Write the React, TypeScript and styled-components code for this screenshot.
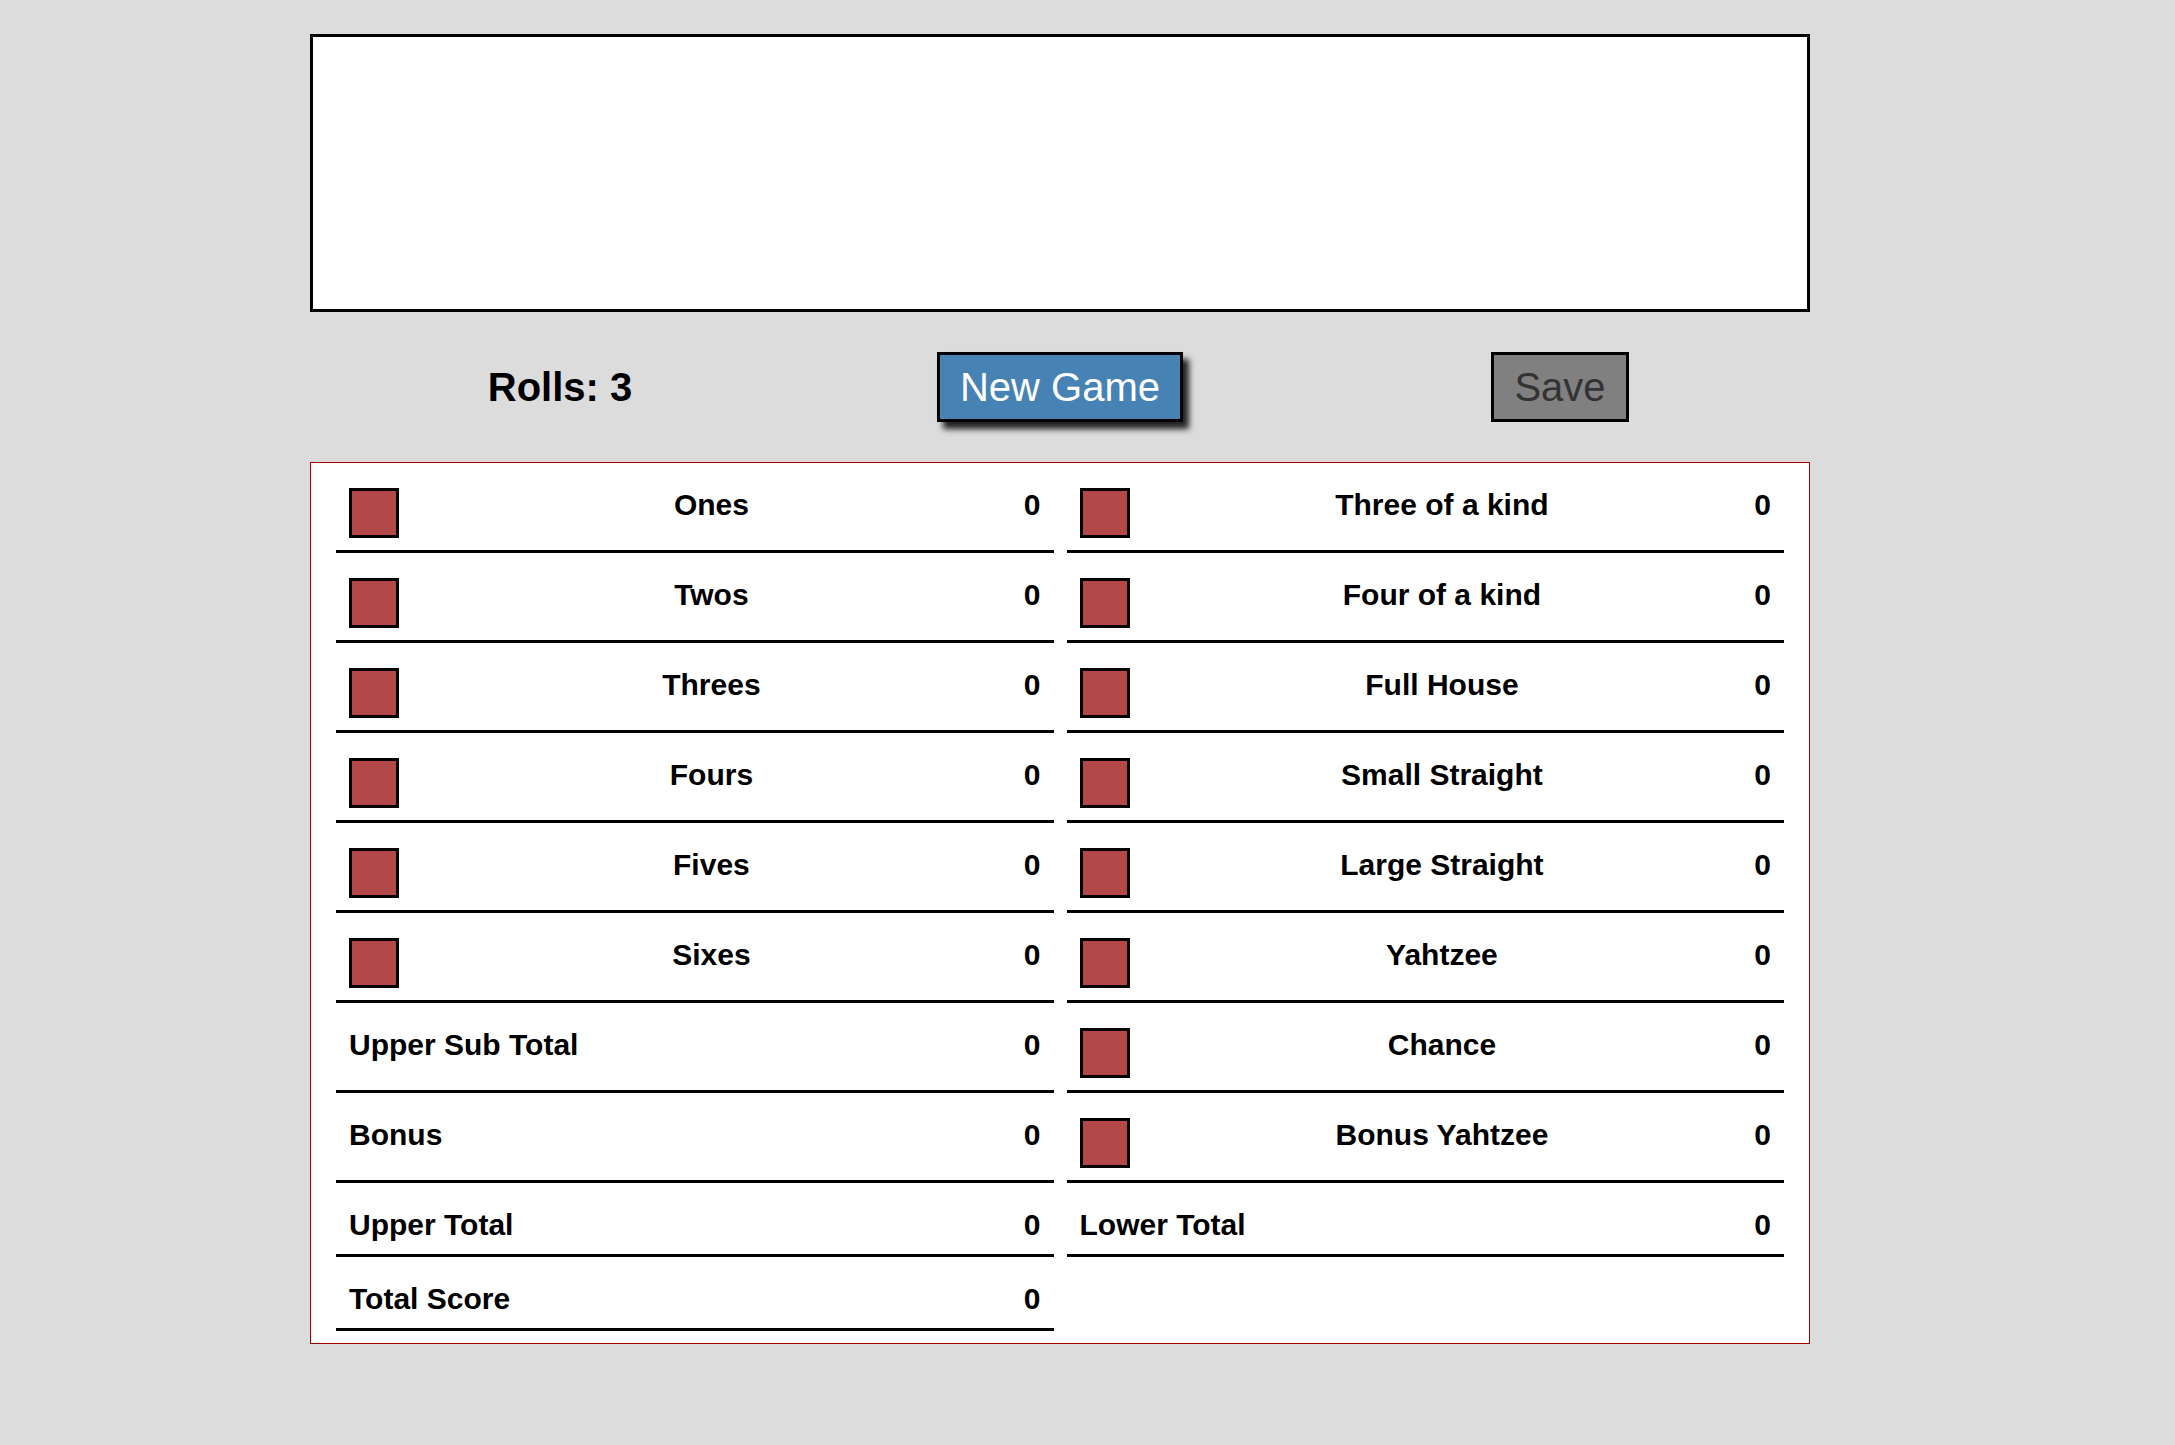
import React from 'react'
import styled, { createGlobalStyle } from 'styled-components'

const GlobalStyle = createGlobalStyle`
  body {
    margin: 0;
    background: #dcdcdc;
    font-family: "Liberation Sans", Arial, sans-serif;
  }
`

const Page = styled.div`
  width: 1500px;
  margin: 34px 0 0 310px;
  padding-bottom: 100px;
`

const DiceTray = styled.div`
  box-sizing: border-box;
  height: 278px;
  background: #fff;
  border: 3px solid #000;
`

const Controls = styled.div`
  display: grid;
  grid-template-columns: repeat(3, 1fr);
  align-items: center;
  justify-items: center;
  height: 70px;
  margin: 40px 0;
`

const Rolls = styled.div`
  font-size: 40px;
  font-weight: bold;
  line-height: 46px;
  color: #000;
`

const Button = styled.button<{ $primary?: boolean }>`
  box-sizing: border-box;
  height: 70px;
  padding: 0 20px;
  font-family: "Liberation Sans", Arial, sans-serif;
  font-size: 40px;
  line-height: 46px;
  border: 3px solid #000;
  border-radius: 0;
  background: ${p => (p.$primary ? '#4682b4' : '#808080')};
  color: ${p => (p.$primary ? '#fff' : '#333')};
  box-shadow: ${p => (p.$primary ? '6px 7px 6px rgba(0, 0, 0, 0.85)' : 'none')};
  cursor: ${p => (p.$primary ? 'pointer' : 'default')};
`

const Board = styled.div`
  box-sizing: border-box;
  background: #fff;
  border: 1px solid #a00000;
  padding: 0 25px 12px;
  display: grid;
  grid-template-columns: 1fr 1fr;
  column-gap: 13px;
`

const Row = styled.div`
  display: flex;
  align-items: flex-start;
  padding: 25px 13px 12px;
  border-bottom: 3px solid #000;
  font-size: 30px;
  font-weight: bold;
  line-height: 34px;
  color: #000;
`

const Empty = styled.div``

const Check = styled.div`
  box-sizing: border-box;
  width: 50px;
  height: 50px;
  flex-shrink: 0;
  background: #b34848;
  border: 3px solid #000;
`

const Label = styled.div<{ $center?: boolean }>`
  flex: 1;
  text-align: ${p => (p.$center ? 'center' : 'left')};
`

const Value = styled.div`
  text-align: right;
`

type Cell = { name: string; box: boolean } | null

const left: Cell[] = [
  { name: 'Ones', box: true },
  { name: 'Twos', box: true },
  { name: 'Threes', box: true },
  { name: 'Fours', box: true },
  { name: 'Fives', box: true },
  { name: 'Sixes', box: true },
  { name: 'Upper Sub Total', box: false },
  { name: 'Bonus', box: false },
  { name: 'Upper Total', box: false },
  { name: 'Total Score', box: false },
]

const right: Cell[] = [
  { name: 'Three of a kind', box: true },
  { name: 'Four of a kind', box: true },
  { name: 'Full House', box: true },
  { name: 'Small Straight', box: true },
  { name: 'Large Straight', box: true },
  { name: 'Yahtzee', box: true },
  { name: 'Chance', box: true },
  { name: 'Bonus Yahtzee', box: true },
  { name: 'Lower Total', box: false },
  null,
]

const ScoreCell: React.FC<{ cell: Cell }> = ({ cell }) => {
  if (!cell) return <Empty />
  return (
    <Row>
      {cell.box && <Check />}
      <Label $center={cell.box}>{cell.name}</Label>
      <Value>0</Value>
    </Row>
  )
}

const App: React.FC = () => {
  return (
    <>
      <GlobalStyle />
      <Page>
        <DiceTray />
        <Controls>
          <Rolls>Rolls: 3</Rolls>
          <Button $primary>New Game</Button>
          <Button disabled>Save</Button>
        </Controls>
        <Board>
          {left.map((cell, i) => (
            <React.Fragment key={i}>
              <ScoreCell cell={cell} />
              <ScoreCell cell={right[i]} />
            </React.Fragment>
          ))}
        </Board>
      </Page>
    </>
  )
}

export default App
